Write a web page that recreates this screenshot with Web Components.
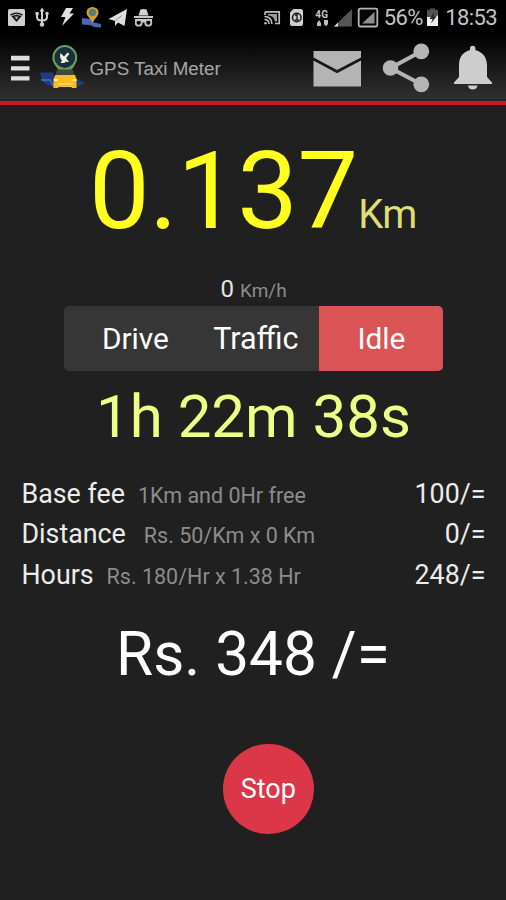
<!DOCTYPE html>
<html lang="en">
<head>
<meta charset="utf-8">
<title>GPS Taxi Meter</title>
<style>
html,body{margin:0;height:100%;background:#202020}
body{font-family:Roboto,"Noto Sans",sans-serif;color:#fff;overflow:hidden}
</style>
</head>
<body>
<taxi-app></taxi-app>
<script>
const define = (name, html) => customElements.define(name, class extends HTMLElement {
  constructor() {
    super();
    this.attachShadow({ mode: 'open' }).innerHTML = html;
  }
});

define('status-bar', `
<style>
:host{display:flex;align-items:center;height:36px;background:#000;color:#c4c4c4;font-size:22px;line-height:36px;box-sizing:border-box;padding:0 9px 0 7px;white-space:nowrap}
svg{display:block;flex:none}
.right{display:flex;align-items:center;margin-left:auto}
.net{font-size:10px;line-height:10px;font-weight:700;margin:0 4px 8px 10px;letter-spacing:.3px;width:14px}
.net svg{margin:0 0 -8px 2px}
</style>
<svg width="150" height="36" viewBox="7 0 150 36">
  <rect x="8" y="9" width="17" height="17" rx="1.500" fill="#d0d0d0"/>
  <path d="M10 14.500q6.500-4 13 0l-6.500 7.500z" fill="#141414"/><path d="M11.500 15.500q5-2.500 10 0" stroke="#c8c8c8" stroke-width="1" fill="none"/><path d="M14.500 16.500h4l-2 3z" fill="#bbb"/>
  <path d="M42 10v15M37 13v4q0 3.500 5 3.500t5-3.500v-4" stroke="#d0d0d0" stroke-width="2" fill="none"/>
  <path d="M42 7.500l-2.500 4h5z" fill="#d0d0d0"/><rect x="35.500" y="12" width="3.200" height="3.200" fill="#d0d0d0"/><circle cx="47" cy="13.500" r="1.700" fill="#d0d0d0"/><circle cx="42" cy="24.500" r="2.200" fill="#d0d0d0"/>
  <path d="M66 8h7l-3.500 5.500H74L62 26l3.500-9H61z" fill="#e2e2e2"/>
  <path d="M82 18l9 1 1 3 9 2v3.500l-7-.5-4-2-8-.5z" fill="#4468b5"/>
  <path d="M92.500 24c-.5-5-6-7-6-11.500a6 5.500 0 0 1 12 0c0 4.500-5 6.500-6 11.500z" fill="#d6a22b"/><circle cx="92.500" cy="12.500" r="3.700" fill="#52817a"/>
  <path d="M127 9L108.500 19l6.500 2 7-6-5 7 7.500 4z" fill="#dedede"/><path d="M115 21v5l3-3.500 4-7z" fill="#dedede"/>
  <path d="M138.500 15.500l2-6q3-1 6 0l2 6z" fill="#d0d0d0"/><rect x="134" y="16" width="19" height="2" fill="#c4c4c4"/>
  <g fill="none" stroke="#c4c4c4" stroke-width="1.800"><circle cx="138.700" cy="22.700" r="3"/><circle cx="148.300" cy="22.700" r="3"/><path d="M141.500 22q2-1 4 0M135 20h17"/></g>
</svg>
<div class="right">
<svg width="42" height="36" viewBox="263 0 42 36">
  <path d="M265 11.800h14.200v11.700H275M265 12v3" stroke="#bdbdbd" stroke-width="1.700" fill="none"/>
  <path d="M268 14h9v7.500h-2q-1-6-7-6z" fill="#999"/>
  <path d="M264.500 16.500q7 0 7.500 7.500M264.500 19.500q4.500 0 4.500 4.500" stroke="#c4c4c4" stroke-width="1.500" fill="none"/><circle cx="265.500" cy="23.300" r="1.200" fill="#c4c4c4"/>
  <path d="M293.500 9h7q2.500 0 2.500 2.500V24q0 2-2 2h-9q-2 0-2-2V12.500z" fill="#cfcfcf"/>
  <circle cx="296.800" cy="17.500" r="4.300" stroke="#222" stroke-width="1.600" fill="none"/><path d="M295 15.500l2-1v5M294.800 20h4" stroke="#222" stroke-width="1.400" fill="none"/>
</svg>
<div class="net">4G<svg width="12" height="7" viewBox="0 0 12 7"><path d="M0 3l2-3 2 3v3H0zM7 0h4v4L9 6.500 7 4z" fill="#bdbdbd"/></svg></div>
<svg width="47" height="36" viewBox="333 0 47 36">
  <path d="M352 9v17.500h-18z" fill="#555"/><path d="M338 22.500v4h-4z" fill="#d8d8d8"/>
  <rect x="358.700" y="8.700" width="18.600" height="17.800" rx="1.500" stroke="#b4b4b4" stroke-width="1.800" fill="#050505"/>
  <path d="M374.500 12v11.500H362z" fill="#8e8e8e"/>
</svg>
<span style="margin-left:3.500px;letter-spacing:-.6px">56%</span>
<svg style="margin-left:3.500px" width="13" height="36" viewBox="426 0 13 36">
  <path d="M430 8.500h5V10h3v8.500h-11V10h3z" fill="#555"/><path d="M427 17h4l2 2 5-4v11h-11z" fill="#eee"/><path d="M434.500 11l-5 8h3l-1.500 4.500 5.500-7h-3z" fill="#2b2b2b"/>
</svg>
<span style="margin-left:6px;letter-spacing:-.6px">18:53</span>
</div>`);

define('app-header', `
<style>
:host{display:flex;height:69px;box-sizing:border-box;background:linear-gradient(#020202,#2e2e2e 60px,#303030);border-bottom:4px solid #d6151b;box-shadow:inset 0 -2px #172b2a;align-items:center}
svg{display:block;flex:none}
h1{margin:0;font:400 18.800px/24px "Liberation Sans",Arial,sans-serif;color:#a6a6a6;flex:1;white-space:nowrap}
</style>
<svg width="89.500" height="65" viewBox="0 36 89.500 65">
  <path d="M11 55.700h18.500v4.800H11zm0 10.500h18.500v4.300H11zm0 10h18.500v4.300H11z" fill="#dedede"/>
  <path d="M40 72.500h13l3 6 22 1 7 3.500-7 3.500H56q-10-.5-14-6z" fill="#233b80"/><path d="M41 80h9l4 7" stroke="#5070b8" stroke-width="1.300" fill="none"/>
  <path d="M60 72l-5-7h20l-5 7z" fill="#62924f"/>
  <circle cx="64.800" cy="57.500" r="11.400" fill="#17303b" stroke="#699c62" stroke-width="2"/>
  <path d="M60.500 53q-1.500 5 1.500 7.500l-1.500 2.500h4l1-1.500q2 .8 3.500.5l-3-4 3.500-4-2-1.500-3.500 4z" fill="#f1f1df"/>
  <path d="M55.500 76q.5-6.500 3-6.500h13q2.500 0 3 6.500z" fill="#3a4b36"/>
  <path d="M55.500 75h19.500l1.500 4v9h-4.500l-.5-1H58.500l-.5 1h-4.500V79z" fill="#ffbc20"/>
  <path d="M54 80h4M72.500 80h4" stroke="#fff0a0" stroke-width="2"/><path d="M58.500 84h14" stroke="#f7dc87" stroke-width="1.500"/>
</svg>
<h1>GPS Taxi Meter</h1>
<svg width="196" height="65" viewBox="310 36 196 65">
  <g fill="#b4b4b4">
    <path d="M313.500 51h47.500v6.500L337 70l-23.500-12.500z"/><path d="M313.500 60.500L337 73.200l24-12.700V86.500h-47.500z"/>
    <circle cx="390.500" cy="68" r="7.800"/><circle cx="421.300" cy="51.300" r="7.900"/><circle cx="421.300" cy="84.300" r="7.900"/>
    <path d="M421 51.500L390.500 68l31 16.500" fill="none" stroke="#b4b4b4" stroke-width="4"/>
  </g>
  <path d="M470 50v-1.500a2.700 2.700 0 0 1 5.400 0V50c7.500 2 11.600 7.500 11.600 15.500v11.500l5 5.500v1.500h-38v-1.500l5-5.500V65.500c0-8 3.500-13.500 11-15.500z" fill="#cdcdcd"/>
  <path d="M468 85.500h9.500a4.700 4 0 0 1-9.500 0z" fill="#cdcdcd"/>
</svg>`);

define('distance-readout', `
<style>
:host{display:flex;align-items:baseline;height:172px;line-height:172px;padding-left:89px;color:#ffff20;font-size:108px;white-space:nowrap}
span{letter-spacing:-.5px}
small{font-size:40px;line-height:40px;color:#dede76;margin-left:.5px}
small ::slotted(*){letter-spacing:-.7px}
</style><span><slot></slot></span><small><slot name="unit"></slot></small>`);

define('speed-readout', `
<style>
:host{display:flex;align-items:baseline;height:24px;line-height:24px;padding-left:220.500px;color:#e4e4e4;font-size:24px;white-space:nowrap}
small{font-size:19px;color:#8c8c8c;margin-left:6px}
</style><span><slot></slot></span><small><slot name="unit"></slot></small>`);

define('mode-switch', `
<style>
:host{display:grid;grid-template-columns:135px 120px 124px;height:65px;margin:5px 0 0 64.400px;width:379px;background:#363636;border-radius:5px;overflow:hidden}
</style><slot></slot>`);

define('mode-option', `
<style>
:host{display:block;text-align:center;font-size:29.800px;line-height:65px;color:#fff;white-space:nowrap}
:host([first]){padding-left:7px}
:host([second]){padding-right:7px;font-size:30.500px}
:host([selected]){background:#da5456}
</style><slot></slot>`);

define('elapsed-time', `
<style>:host{display:block;height:91px;line-height:91px;font-size:60px;color:#edff84;padding-left:96px;white-space:nowrap}</style><slot></slot>`);

define('fee-row', `
<style>
:host{display:flex;align-items:baseline;height:40.300px;line-height:40.300px;padding:0 20.500px 0 21.500px;font-size:26.800px;color:#ececec;white-space:nowrap}
.note{font-size:21.500px;color:#8c8c8c;margin-left:var(--note-gap,13px)}
.amount{margin-left:auto}
</style><span><slot></slot></span><span class="note"><slot name="note"></slot></span><span class="amount"><slot name="amount"></slot></span>`);

define('total-fare', `
<style>:host{display:block;height:120px;line-height:120px;font-size:60.300px;color:#fff;padding-left:116px;white-space:nowrap}</style><slot></slot>`);

define('round-button', `
<style>
:host{display:block;margin:29px 0 0 223px;width:90.500px;height:90.500px}
button{all:unset;display:block;width:100%;height:100%;border-radius:50%;background:#dc3748;text-align:center;font-size:27px;line-height:89px;color:#fff}
</style><button><slot></slot></button>`);

define('taxi-app', `
<style>
:host{display:flex;flex-direction:column;width:506px;height:900px;background:#202020;overflow:hidden}
.fees{padding:12.100px 0 0}
:host>*,status-bar,app-header{flex:none}
</style>
<status-bar></status-bar>
<app-header></app-header>
<distance-readout>0.137<span slot="unit">Km</span></distance-readout>
<speed-readout>0<span slot="unit">Km/h</span></speed-readout>
<mode-switch><mode-option first>Drive</mode-option><mode-option second>Traffic</mode-option><mode-option selected>Idle</mode-option></mode-switch>
<elapsed-time>1h 22m 38s</elapsed-time>
<div class="fees">
<fee-row>Base fee<span slot="note">1Km and 0Hr free</span><span slot="amount">100/=</span></fee-row>
<fee-row style="--note-gap:18px">Distance<span slot="note">Rs. 50/Km x 0 Km</span><span slot="amount">0/=</span></fee-row>
<fee-row style="--note-gap:13px">Hours<span slot="note">Rs. 180/Hr x 1.38 Hr</span><span slot="amount">248/=</span></fee-row>
</div>
<total-fare>Rs. 348 /=</total-fare>
<round-button>Stop</round-button>`);
</script>
</body>
</html>
